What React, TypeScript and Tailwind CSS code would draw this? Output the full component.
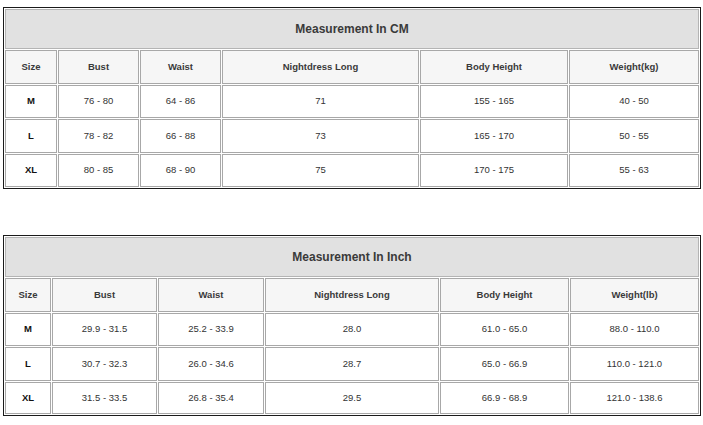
import React from "react";

type T = {
  title: string;
  widths: string[];
  heads: string[];
  rows: string[][];
  rowH: string[];
};

const tables: T[] = [
  {
    title: "Measurement In CM",
    widths: ["w-[52px]", "w-[81px]", "w-[81px]", "w-[197px]", "w-[148px]", "w-[130px]"],
    heads: ["Size", "Bust", "Waist", "Nightdress Long", "Body Height", "Weight(kg)"],
    rows: [
      ["M", "76 - 80", "64 - 86", "71", "155 - 165", "40 - 50"],
      ["L", "78 - 82", "66 - 88", "73", "165 - 170", "50 - 55"],
      ["XL", "80 - 85", "68 - 90", "75", "170 - 175", "55 - 63"],
    ],
    rowH: ["h-[34px]", "h-[33px]", "h-[34px]", "h-[33px]"],
  },
  {
    title: "Measurement In Inch",
    widths: ["w-[46px]", "w-[105px]", "w-[106px]", "w-[174px]", "w-[129px]", "w-[129px]"],
    heads: ["Size", "Bust", "Waist", "Nightdress Long", "Body Height", "Weight(lb)"],
    rows: [
      ["M", "29.9 - 31.5", "25.2 - 33.9", "28.0", "61.0 - 65.0", "88.0 - 110.0"],
      ["L", "30.7 - 32.3", "26.0 - 34.6", "28.7", "65.0 - 66.9", "110.0 - 121.0"],
      ["XL", "31.5 - 33.5", "26.8 - 35.4", "29.5", "66.9 - 68.9", "121.0 - 138.6"],
    ],
    rowH: ["h-[34px]", "h-[33px]", "h-[34px]", "h-[32px]"],
  },
];

function SizeTable({ t }: { t: T }) {
  return (
    <table className="ml-[3px] w-[698px] table-fixed border border-[#1a1a1a] border-separate border-spacing-[1px] [font-family:'Liberation_Sans',Arial,sans-serif]">
      <colgroup>
        {t.widths.map((w, i) => (
          <col key={i} className={w} />
        ))}
      </colgroup>
      <tbody>
        <tr>
          <td
            colSpan={6}
            className="h-[40px] border border-[#b4b4b4] bg-[#e1e1e1] p-0 text-center text-[12px] font-bold text-[#3a3a3a]"
          >
            {t.title}
          </td>
        </tr>
        <tr>
          {t.heads.map((h, i) => (
            <td
              key={i}
              className={`${t.rowH[0]} border border-[#a8a8a8] bg-[#f6f6f6] p-0 text-center text-[9.5px] font-bold text-[#3a3a3a]`}
            >
              {h}
            </td>
          ))}
        </tr>
        {t.rows.map((r, ri) => (
          <tr key={ri}>
            {r.map((c, ci) => (
              <td
                key={ci}
                className={
                  ci === 0
                    ? `${t.rowH[ri + 1]} border border-[#a8a8a8] bg-white p-0 text-center text-[9.5px] font-bold text-[#111]`
                    : `${t.rowH[ri + 1]} border border-[#a8a8a8] bg-white p-0 text-center text-[9.5px] text-[#333]`
                }
              >
                {c}
              </td>
            ))}
          </tr>
        ))}
      </tbody>
    </table>
  );
}

export default function App() {
  return (
    <div className="flex h-[425px] w-[703px] flex-col gap-[46px] overflow-hidden bg-white pt-[7px]">
      <SizeTable t={tables[0]} />
      <SizeTable t={tables[1]} />
    </div>
  );
}
